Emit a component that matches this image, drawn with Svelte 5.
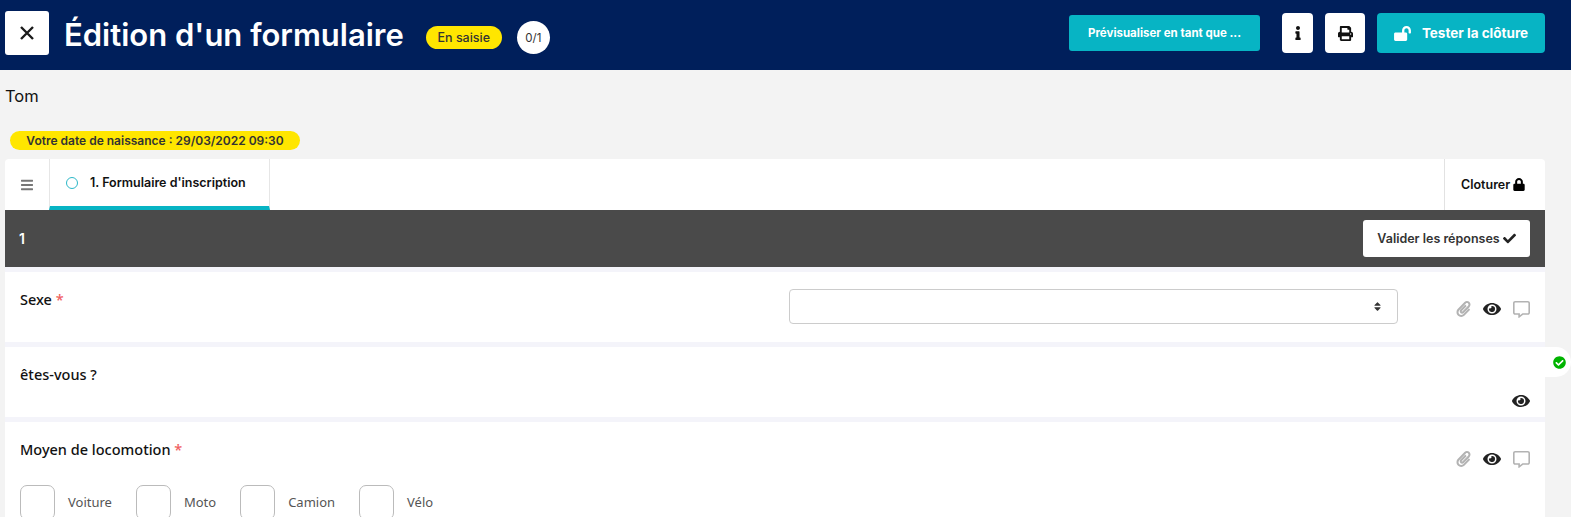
<script lang="ts">
const icons = {
  check: { box: "0 0 512 512", d: "M173.898 439.404l-166.4-166.4c-9.997-9.997-9.997-26.206 0-36.204l36.203-36.204c9.997-9.998 26.207-9.998 36.204 0L192 312.69 432.095 72.596c9.997-9.997 26.207-9.997 36.204 0l36.203 36.204c9.997 9.997 9.997 26.206 0 36.204l-294.4 294.401c-9.998 9.997-26.207 9.997-36.204-.001z" },
  lock: { box: "0 0 448 512", d: "M400 224h-24v-72C376 68.2 307.8 0 224 0S72 68.2 72 152v72H48c-26.5 0-48 21.5-48 48v192c0 26.5 21.5 48 48 48h352c26.5 0 48-21.5 48-48V272c0-26.5-21.5-48-48-48zm-104 0H152v-72c0-39.7 32.3-72 72-72s72 32.3 72 72v72z" },
  open: { box: "0 0 576 512", d: "M423.5 0C339.5.3 272 69.5 272 153.5V224H48c-26.5 0-48 21.5-48 48v192c0 26.5 21.5 48 48 48h352c26.5 0 48-21.5 48-48V272c0-26.5-21.5-48-48-48h-48v-71.1c0-39.6 31.7-72.5 71.3-72.9 40-.4 72.7 32.1 72.7 72v80c0 13.3 10.7 24 24 24h32c13.3 0 24-10.7 24-24v-80C576 68 507.5-.3 423.5 0z" },
  eye: { box: "0 0 576 512", d: "M572.52 241.4C518.29 135.59 410.93 64 288 64S57.68 135.64 3.48 241.41a32.35 32.35 0 0 0 0 29.19C57.71 376.41 165.07 448 288 448s230.32-71.64 284.52-177.41a32.35 32.35 0 0 0 0-29.19zM288 400a144 144 0 1 1 144-144 143.93 143.93 0 0 1-144 144zm0-240a95.31 95.31 0 0 0-25.31 3.79 47.85 47.85 0 0 1-66.9 66.9A95.78 95.78 0 1 0 288 160z" },
  print: { box: "0 0 512 512", d: "M448 192V77.25c0-8.49-3.37-16.62-9.37-22.63L393.37 9.37c-6-6-14.14-9.37-22.63-9.37H96C78.33 0 64 14.33 64 32v160c-35.35 0-64 28.65-64 64v112c0 8.84 7.16 16 16 16h48v96c0 17.67 14.33 32 32 32h320c17.67 0 32-14.33 32-32v-96h48c8.84 0 16-7.16 16-16V256c0-35.35-28.65-64-64-64zm-64 256H128v-96h256v96zm0-224H128V64h192v48c0 8.84 7.16 16 16 16h48v96zm48 72c-13.25 0-24-10.75-24-24 0-13.26 10.75-24 24-24s24 10.74 24 24c0 13.25-10.75 24-24 24z" },
  info: { box: "0 0 192 512", d: "M20 424.229h20V279.771H20c-11.046 0-20-8.954-20-20V212c0-11.046 8.954-20 20-20h112c11.046 0 20 8.954 20 20v212.229h20c11.046 0 20 8.954 20 20V492c0 11.046-8.954 20-20 20H20c-11.046 0-20-8.954-20-20v-47.771c0-11.046 8.954-20 20-20zM96 0C56.235 0 24 32.235 24 72s32.235 72 72 72 72-32.235 72-72S135.764 0 96 0z" },
  bars: { box: "0 0 448 512", d: "M16 132h416c8.837 0 16-7.163 16-16V76c0-8.837-7.163-16-16-16H16C7.163 60 0 67.163 0 76v40c0 8.837 7.163 16 16 16zm0 160h416c8.837 0 16-7.163 16-16v-40c0-8.837-7.163-16-16-16H16c-8.837 0-16 7.163-16 16v40c0 8.837 7.163 16 16 16zm0 160h416c8.837 0 16-7.163 16-16v-40c0-8.837-7.163-16-16-16H16c-8.837 0-16 7.163-16 16v40c0 8.837 7.163 16 16 16z" },
  done: { box: "0 0 512 512", d: "M504 256c0 136.967-111.033 248-248 248S8 392.967 8 256 119.033 8 256 8s248 111.033 248 248zM227.314 387.314l184-184c6.248-6.248 6.248-16.379 0-22.627l-22.627-22.627c-6.248-6.249-16.379-6.249-22.628 0L216 308.118l-70.059-70.059c-6.248-6.248-16.379-6.248-22.628 0l-22.627 22.627c-6.248 6.248-6.248 16.379 0 22.627l104 104c6.249 6.25 16.379 6.25 22.628.001z" },
  clip: { box: "0 0 448 512", d: "M43.246 466.142c-58.43-60.289-57.341-157.511 1.386-217.581L254.392 34c44.316-45.332 116.351-45.336 160.671 0 43.89 44.894 43.943 117.329 0 162.276L232.214 383.128c-29.855 30.537-78.633 30.111-107.982-.998-28.275-29.97-27.368-77.473 1.452-106.953l143.743-146.835c6.182-6.314 16.312-6.422 22.626-.241l22.861 22.379c6.315 6.182 6.422 16.312.241 22.626L171.427 319.927c-4.932 5.045-5.236 13.428-.648 18.292 4.372 4.634 11.245 4.711 15.688.165l182.849-186.851c19.613-20.062 19.613-52.725-.011-72.798-19.189-19.627-49.957-19.637-69.154 0L90.39 293.295c-34.763 35.56-35.299 93.12-1.191 128.313 34.01 35.093 88.985 35.137 123.058.286l172.06-175.999c6.177-6.319 16.307-6.433 22.626-.256l22.877 22.364c6.319 6.177 6.434 16.307.256 22.626l-172.06 175.998c-59.576 60.938-155.943 60.216-214.77-.485z" },
  comment: { box: "0 0 512 512", d: "M448 0H64C28.7 0 0 28.7 0 64v288c0 35.3 28.7 64 64 64h96v84c0 7.1 5.8 12 12 12 2.4 0 4.9-.7 7.1-2.4L304 416h144c35.3 0 64-28.7 64-64V64c0-35.3-28.7-64-64-64zm16 352c0 8.8-7.2 16-16 16H288l-12.8 9.6L208 428v-60H64c-8.8 0-16-7.2-16-16V64c0-8.8 7.2-16 16-16h384c8.8 0 16 7.2 16 16v288z" },
  sort: { box: "0 0 320 512", d: "M41 288h238c21.4 0 32.1 25.9 17 41L177 448c-9.4 9.4-24.6 9.4-33.9 0L24 329c-15.1-15.1-4.4-41 17-41zm255-105L177 64c-9.4-9.4-24.6-9.4-33.9 0L24 183c-15.1 15.1-4.4 41 17 41h238c21.4 0 32.1-25.9 17-41z" }
};

const transports = ["Voiture", "Moto", "Camion", "Vélo"];
</script>

{#snippet icon(name: keyof typeof icons, cls: string)}
  <svg class={cls} viewBox={icons[name].box} fill="currentColor" aria-hidden="true"><path d={icons[name].d} /></svg>
{/snippet}

{#snippet actions()}
  <div class="actions">
    {@render icon("clip", "i-clip")}
    {@render icon("eye", "i-eye")}
    {@render icon("comment", "i-comment")}
  </div>
{/snippet}

<div class="page">
  <header class="topbar">
    <button class="close" aria-label="Fermer">
      <svg viewBox="0 0 16 16" width="16" height="16"><path d="M2 2 14 14M14 2 2 14" stroke="#1b1b1b" stroke-width="2.4" fill="none" /></svg>
    </button>
    <h1>Édition d'un formulaire</h1>
    <span class="state">En saisie</span>
    <span class="count">0/1</span>
    <div class="spacer"></div>
    <button class="preview">Prévisualiser en tant que ...</button>
    <button class="square info" aria-label="Informations">{@render icon("info", "i-info")}</button>
    <button class="square print" aria-label="Imprimer">{@render icon("print", "i-print")}</button>
    <button class="test">{@render icon("open", "i-open")}Tester la clôture</button>
  </header>

  <main class="body">
    <p class="name">Tom</p>
    <span class="date">Votre date de naissance : 29/03/2022 09:30</span>

    <nav class="tabs">
      <div class="burger">{@render icon("bars", "i-bars")}</div>
      <div class="tab"><span class="ring"></span>1. Formulaire d'inscription</div>
      <div class="spacer"></div>
      <div class="finish">Cloturer{@render icon("lock", "i-lock")}</div>
    </nav>

    <div class="section">
      <span class="num">1</span>
      <button class="validate">Valider les réponses{@render icon("check", "i-check")}</button>
    </div>

    <div class="questions">
      <section class="question">
        <div class="label">Sexe <em>*</em></div>
        <div class="select">{@render icon("sort", "i-sort")}</div>
        {@render actions()}
      </section>

      <section class="question">
        <div class="label">êtes-vous ?</div>
        <div class="actions only-eye">{@render icon("eye", "i-eye")}</div>
        <div class="bump">{@render icon("done", "i-done")}</div>
      </section>

      <section class="question tall">
        <div class="head">
          <div class="label">Moyen de locomotion <em>*</em></div>
          {@render actions()}
        </div>
        <div class="options">
          {#each transports as t}
            <label class="option"><span class="box"></span>{t}</label>
          {/each}
        </div>
      </section>
    </div>
  </main>
</div>

<style>
:global(body) {
  margin: 0;
  background: #f3f3f3;
}

.page {
  height: 517px;
  overflow: hidden;
  font-family: Inter, "Liberation Sans", sans-serif;
  color: #111;
}

button {
  border: none;
  font-family: inherit;
  padding: 0;
  display: flex;
  align-items: center;
  justify-content: center;
}

svg {
  display: block;
}

.spacer {
  flex: 1;
}

.topbar {
  height: 70px;
  box-sizing: border-box;
  background: #001f5b;
  display: flex;
  align-items: center;
  padding: 0 26px 0 5px;
}

.close {
  width: 44px;
  height: 44px;
  background: #fff;
  border-radius: 3px;
  margin-top: -4px;
}

h1 {
  margin: 0 0 0 15px;
  color: #fff;
  font-size: 31px;
  font-weight: 600;
  white-space: nowrap;
  margin-top: -2px;
}

.state {
  margin-left: 22px;
  width: 76px;
  height: 23px;
  border-radius: 12px;
  background: #ffe600;
  color: #333;
  font-size: 12.5px;
  font-weight: 500;
  display: flex;
  align-items: center;
  justify-content: center;
  margin-top: 5px;
}

.count {
  margin-left: 15px;
  width: 33px;
  height: 33px;
  border-radius: 50%;
  background: #fff;
  color: #333;
  font-size: 11.5px;
  display: flex;
  align-items: center;
  justify-content: center;
  margin-top: 5px;
}

.preview {
  width: 191px;
  height: 36px;
  background: #07b4c4;
  color: #fff;
  font-size: 11.5px;
  font-weight: 700;
  border-radius: 3px;
  margin-right: 22px;
  margin-top: -4px;
}

.square {
  height: 40px;
  background: #fff;
  color: #111;
  border-radius: 4px;
  margin-top: -4px;
}

.info {
  width: 31px;
  margin-right: 12px;
}

.print {
  width: 40px;
  margin-right: 12px;
}

.test {
  width: 168px;
  height: 40px;
  background: #07b4c4;
  color: #fff;
  font-size: 13.5px;
  font-weight: 700;
  border-radius: 4px;
  margin-top: -4px;
  gap: 11px;
}

.i-info {
  height: 14px;
  width: 6px;
}

.i-print {
  width: 15px;
  height: 15px;
}

.i-open {
  width: 17px;
  height: 15px;
}

.body {
  padding: 0 26px 0 5px;
}

.name {
  margin: 0;
  padding-top: 15px;
  height: 46px;
  box-sizing: border-box;
  line-height: 22px;
  font-size: 16.5px;
  color: #111;
}

.date {
  display: inline-flex;
  align-items: center;
  margin: 15px 0 0 5px;
  width: 290px;
  height: 19px;
  box-sizing: border-box;
  justify-content: center;
  border-radius: 10px;
  background: #ffe600;
  color: #333;
  font-size: 12px;
  font-weight: 600;
  white-space: nowrap;
  vertical-align: top;
}

.tabs {
  margin-top: 9px;
  height: 51px;
  background: #fff;
  border-radius: 4px 4px 0 0;
  display: flex;
  align-items: stretch;
}

.burger {
  width: 44px;
  display: flex;
  align-items: center;
  justify-content: center;
  color: #777;
}

.i-bars {
  width: 12px;
  height: 14px;
}

.tab {
  width: 221px;
  box-sizing: border-box;
  border-left: 1px solid #e6e6e6;
  border-right: 1px solid #e6e6e6;
  border-bottom: 4px solid #07b4c4;
  display: flex;
  align-items: center;
  padding: 0 0 0 16px;
  font-size: 12.5px;
  font-weight: 600;
  white-space: nowrap;
}

.ring {
  width: 10px;
  height: 10px;
  border: 1.5px solid #2db8c8;
  border-radius: 50%;
  margin-right: 12px;
  flex: none;
}

.finish {
  width: 101px;
  box-sizing: border-box;
  border-left: 1px solid #e2e2e2;
  display: flex;
  align-items: center;
  padding-left: 16px;
  font-size: 12.5px;
  font-weight: 600;
  gap: 3px;
}

.i-lock {
  width: 12px;
  height: 13px;
  color: #000;
}

.section {
  height: 57px;
  background: #4a4a4a;
  display: flex;
  align-items: center;
  justify-content: space-between;
  padding: 0 15px 0 14px;
  color: #fff;
  font-size: 14px;
  font-weight: 600;
}

.validate {
  width: 167px;
  height: 37px;
  background: #fff;
  color: #333;
  border-radius: 3px;
  font-size: 12.5px;
  font-weight: 600;
  gap: 3px;
}

.i-check {
  width: 13px;
  height: 13px;
  color: #222;
}

.questions {
  background: #f4f4fa;
  padding-top: 5px;
  display: flex;
  flex-direction: column;
  gap: 5px;
}

.question {
  height: 70px;
  box-sizing: border-box;
  background: #fff;
  padding: 17px 15px 0 15px;
  display: flex;
  align-items: flex-start;
  position: relative;
}

.label {
  width: 769px;
  font-family: "Noto Sans", sans-serif;
  font-size: 14.5px;
  font-weight: 500;
  line-height: 20px;
  color: #111;
  white-space: nowrap;
  flex: none;
}

.label em {
  color: #f0605f;
  font-style: normal;
}

.select {
  width: 609px;
  height: 35px;
  box-sizing: border-box;
  border: 1px solid #ccc;
  border-radius: 4px;
  display: flex;
  align-items: center;
  justify-content: flex-end;
  padding-right: 16px;
  color: #333;
}

.i-sort {
  width: 7px;
  height: 11px;
}

.actions {
  margin-left: auto;
  display: flex;
  align-items: center;
  gap: 12px;
  height: 16px;
  margin-top: 12px;
}

.only-eye {
  margin-top: 29px;
}

.i-clip {
  width: 15px;
  height: 16px;
  color: #b3b3b3;
}

.i-eye {
  width: 18px;
  height: 16px;
  color: #222;
}

.i-comment {
  width: 17px;
  height: 17px;
  color: #b3b3b3;
}

.bump {
  position: absolute;
  top: 0;
  right: -26px;
  width: 26px;
  height: 30px;
  background: #fff;
  border-radius: 0 15px 15px 0;
  display: flex;
  align-items: center;
  padding-left: 8px;
  box-sizing: border-box;
}

.i-done {
  width: 13px;
  height: 13px;
  color: #00b300;
}

.tall {
  height: 140px;
  display: block;
}

.head {
  display: flex;
  align-items: flex-start;
}

.options {
  display: flex;
  margin-top: 18px;
}

.option {
  display: flex;
  align-items: flex-start;
  font-family: "Noto Sans", sans-serif;
  font-size: 13px;
  line-height: 34px;
  color: #555;
  margin-right: 24px;
}

.box {
  width: 35px;
  height: 35px;
  box-sizing: border-box;
  border: 1px solid #bbb;
  border-radius: 7px;
  margin-right: 13px;
}
</style>
